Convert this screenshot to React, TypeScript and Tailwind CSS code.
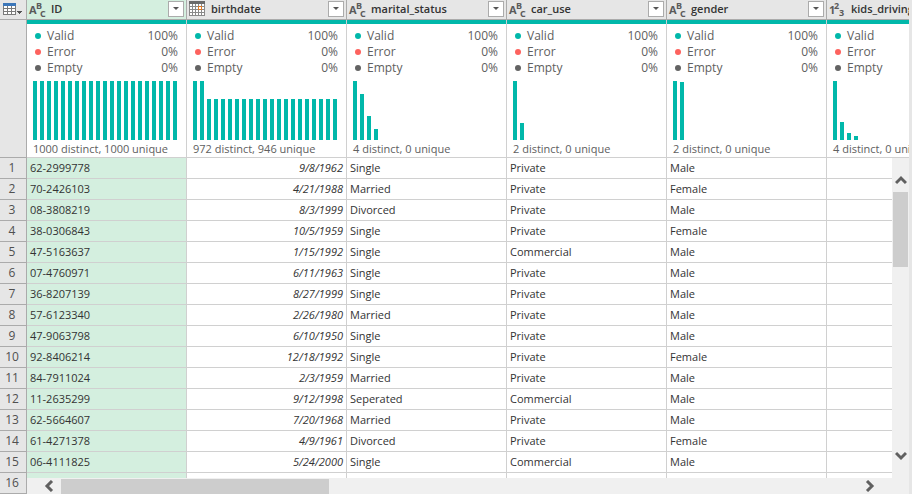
type ColumnKind = "text" | "date" | "number";

type Column = {
  name: string;
  kind: ColumnKind;
  summary: string;
  bars: number[];
  selected?: boolean;
};

const columns: Column[] = [
  { name: "ID", kind: "text", summary: "1000 distinct, 1000 unique", bars: Array(21).fill(59), selected: true },
  { name: "birthdate", kind: "date", summary: "972 distinct, 946 unique", bars: [59, 59, ...Array(19).fill(41)] },
  { name: "marital_status", kind: "text", summary: "4 distinct, 0 unique", bars: [59, 46, 24, 11] },
  { name: "car_use", kind: "text", summary: "2 distinct, 0 unique", bars: [59, 17] },
  { name: "gender", kind: "text", summary: "2 distinct, 0 unique", bars: [59, 58] },
  { name: "kids_driving", kind: "number", summary: "4 distinct, 0 unique", bars: [59, 18, 7, 4] },
];

const rows: string[][] = [
  ["62-2999778", "9/8/1962", "Single", "Private", "Male"],
  ["70-2426103", "4/21/1988", "Married", "Private", "Female"],
  ["08-3808219", "8/3/1999", "Divorced", "Private", "Male"],
  ["38-0306843", "10/5/1959", "Single", "Private", "Female"],
  ["47-5163637", "1/15/1992", "Single", "Commercial", "Male"],
  ["07-4760971", "6/11/1963", "Single", "Private", "Male"],
  ["36-8207139", "8/27/1999", "Single", "Private", "Male"],
  ["57-6123340", "2/26/1980", "Married", "Private", "Male"],
  ["47-9063798", "6/10/1950", "Single", "Private", "Male"],
  ["92-8406214", "12/18/1992", "Single", "Private", "Female"],
  ["84-7911024", "2/3/1959", "Married", "Private", "Male"],
  ["11-2635299", "9/12/1998", "Seperated", "Commercial", "Male"],
  ["62-5664607", "7/20/1968", "Married", "Private", "Male"],
  ["61-4271378", "4/9/1961", "Divorced", "Private", "Female"],
  ["06-4111825", "5/24/2000", "Single", "Commercial", "Male"],
  ["", "", "", "", ""],
];

const quality = [
  { label: "Valid", value: "100%", dot: "bg-[#01b8aa]" },
  { label: "Error", value: "0%", dot: "bg-[#fd625e]" },
  { label: "Empty", value: "0%", dot: "bg-[#636363]" },
];

function KindIcon({ kind }: { kind: ColumnKind }) {
  if (kind === "date") {
    return (
      <svg width="18" height="18" viewBox="0 0 18 18" shapeRendering="crispEdges" aria-hidden="true">
        <rect x="0" y="1" width="16" height="15" fill="#8a8a8a" />
        <rect x="0" y="1" width="16" height="3" fill="#6a6a6a" />
        {[4, 7, 10, 13].map((y) =>
          [1, 4, 7, 10, 13].map((x) => <rect key={`${x}-${y}`} x={x} y={y} width="2" height="2" fill="#fff" />),
        )}
        <rect x="9" y="6" width="4" height="4" fill="#e07b28" />
        <rect x="10" y="7" width="2" height="2" fill="#fff" />
      </svg>
    );
  }
  const isText = kind === "text";
  const glyphs = isText ? ["A", "B", "C"] : ["1", "2", "3"];
  return (
    <svg
      width="18"
      height="18"
      viewBox="0 0 18 18"
      fill="#5a5a5a"
      className="overflow-visible font-['Open_Sans',sans-serif] font-bold"
      aria-hidden="true"
    >
      <text x="0" y="14" fontSize="11">{glyphs[0]}</text>
      <text x={isText ? 7 : 5} y="9" fontSize="9">{glyphs[1]}</text>
      <text x={isText ? 11 : 10} y={isText ? 17 : 16} fontSize="9">{glyphs[2]}</text>
    </svg>
  );
}

function TableIcon() {
  return (
    <svg width="20" height="14" viewBox="0 0 20 14" shapeRendering="crispEdges" aria-hidden="true">
      <rect x="0" y="0" width="13" height="12" fill="#7a7a7a" />
      <rect x="0" y="0" width="13" height="3" fill="#3c76b9" />
      {[3, 6, 9].map((y) =>
        [1, 5, 9].map((x) => <rect key={`${x}-${y}`} x={x} y={y} width="3" height="2" fill="#fff" />),
      )}
      <path d="M14 8h5v1h-1v1h-1v1h-1v-1h-1v-1h-1z" fill="#555" />
    </svg>
  );
}

function HeaderCell({ column }: { column: Column }) {
  return (
    <th
      scope="col"
      className={`h-5 overflow-hidden border-r border-b border-[#ababab] p-0 ${column.selected ? "bg-[#d4efdf]" : "bg-[#e6e6e6]"}`}
    >
      <div className="flex h-[19px] items-start pr-0.5 pl-0.5">
        <button type="button" aria-label={`${column.name} type`} className="shrink-0">
          <KindIcon kind={column.kind} />
        </button>
        <span className="min-w-0 flex-1 overflow-hidden pt-px pl-1 text-left text-[11px] leading-4 font-semibold whitespace-nowrap text-[#333]">
          {column.name}
        </span>
        <button
          type="button"
          aria-label={`Filter ${column.name}`}
          className="mt-px flex size-4 shrink-0 items-center justify-center border border-[#ababab] bg-white"
        >
          <svg width="6" height="4" viewBox="0 0 6 4" aria-hidden="true">
            <path d="M0 0h6L3 3z" fill="#555" />
          </svg>
        </button>
      </div>
    </th>
  );
}

function ProfileCell({ column }: { column: Column }) {
  return (
    <td className="border-r border-b border-[#d0d0d0] bg-white p-0 align-top">
      <div className="h-1 bg-[#01b8aa]" />
      <dl className="pt-1 pr-2 pl-2 text-[12px] leading-4 text-[#606060]">
        {quality.map((item) => (
          <div key={item.label} className="flex items-center">
            <span className={`mr-1.5 size-1.5 rounded-full ${item.dot}`} />
            <dt className="flex-1">{item.label}</dt>
            <dd>{item.value}</dd>
          </div>
        ))}
      </dl>
      <div className="mt-[5px] flex h-[59px] items-end gap-[3px] pl-1.5">
        {column.bars.map((height, i) => (
          <span key={i} className="w-1 bg-[#01b8aa]" style={{ height }} />
        ))}
      </div>
      <p className="h-[17px] overflow-hidden pt-px pl-1.5 text-[11px] leading-4 whitespace-nowrap text-[#606060]">
        {column.summary}
      </p>
    </td>
  );
}

function Chevron({ d, label, className }: { d: string; label: string; className: string }) {
  return (
    <button type="button" aria-label={label} className={`flex shrink-0 ${className}`}>
      <svg width="12" height="12" viewBox="0 0 12 12" fill="none" stroke="#606060" strokeWidth="3" aria-hidden="true">
        <path d={d} />
      </svg>
    </button>
  );
}

export default function App() {
  return (
    <main className="flex h-screen bg-[#e6e6e6] font-['Open_Sans','Noto_Sans',sans-serif]">
      <div className="relative mr-[3px] min-w-0 flex-1 overflow-hidden bg-white">
        <table className="w-[987px] table-fixed border-separate border-spacing-0">
          <colgroup>
            <col className="w-[27px]" />
            {columns.map((column) => (
              <col key={column.name} className="w-40" />
            ))}
          </colgroup>
          <thead>
            <tr>
              <th className="border-r border-b border-[#ababab] bg-[#e6e6e6] p-0">
                <button type="button" aria-label="Table options" className="flex h-[19px] items-center pt-px pl-[3px]">
                  <TableIcon />
                </button>
              </th>
              {columns.map((column) => (
                <HeaderCell key={column.name} column={column} />
              ))}
            </tr>
            <tr>
              <td className="h-[138px] border-r border-b border-[#ababab] bg-[#e6e6e6] p-0" />
              {columns.map((column) => (
                <ProfileCell key={column.name} column={column} />
              ))}
            </tr>
          </thead>
          <tbody>
            {rows.map((row, r) => (
              <tr key={r} className="h-[21px] text-[11px] leading-4 text-[#333]">
                <th
                  scope="row"
                  className="border-r border-b border-[#ababab] bg-[#e6e6e6] p-0 pr-0.5 text-center text-[12px] font-normal text-[#505050]"
                >
                  {r + 1}
                </th>
                {columns.map((column, c) => (
                  <td
                    key={column.name}
                    className={`border-r border-b border-[#d0d0d0] px-[3px] py-0 ${column.selected ? "bg-[#d4efdf]" : "bg-white"} ${column.kind === "date" ? "text-right italic" : ""}`}
                  >
                    {row[c]}
                  </td>
                ))}
              </tr>
            ))}
          </tbody>
        </table>

        <div className="absolute top-[158px] right-0 bottom-0 flex w-[17px] flex-col bg-[#f0f0f0] pb-4">
          <Chevron label="Scroll up" d="M1 9l5-5 5 5" className="h-[34px] items-end justify-center pb-1.5" />
          <div className="flex-1">
            <div className="mx-px h-[75px] bg-[#cdcdcd]" />
          </div>
          <Chevron label="Scroll down" d="M1 3l5 5 5-5" className="h-[34px] items-start justify-center pt-1.5" />
        </div>
        <div className="absolute right-[17px] bottom-0 left-[27px] flex h-4 bg-[#f0f0f0]">
          <Chevron label="Scroll left" d="M9 1l-5 5 5 5" className="w-[34px] items-center justify-end pr-1.5" />
          <div className="flex-1 pt-px">
            <div className="h-full w-[268px] bg-[#cdcdcd]" />
          </div>
          <Chevron label="Scroll right" d="M3 1l5 5-5 5" className="w-[34px] items-center justify-start pl-1.5" />
        </div>
      </div>
    </main>
  );
}
